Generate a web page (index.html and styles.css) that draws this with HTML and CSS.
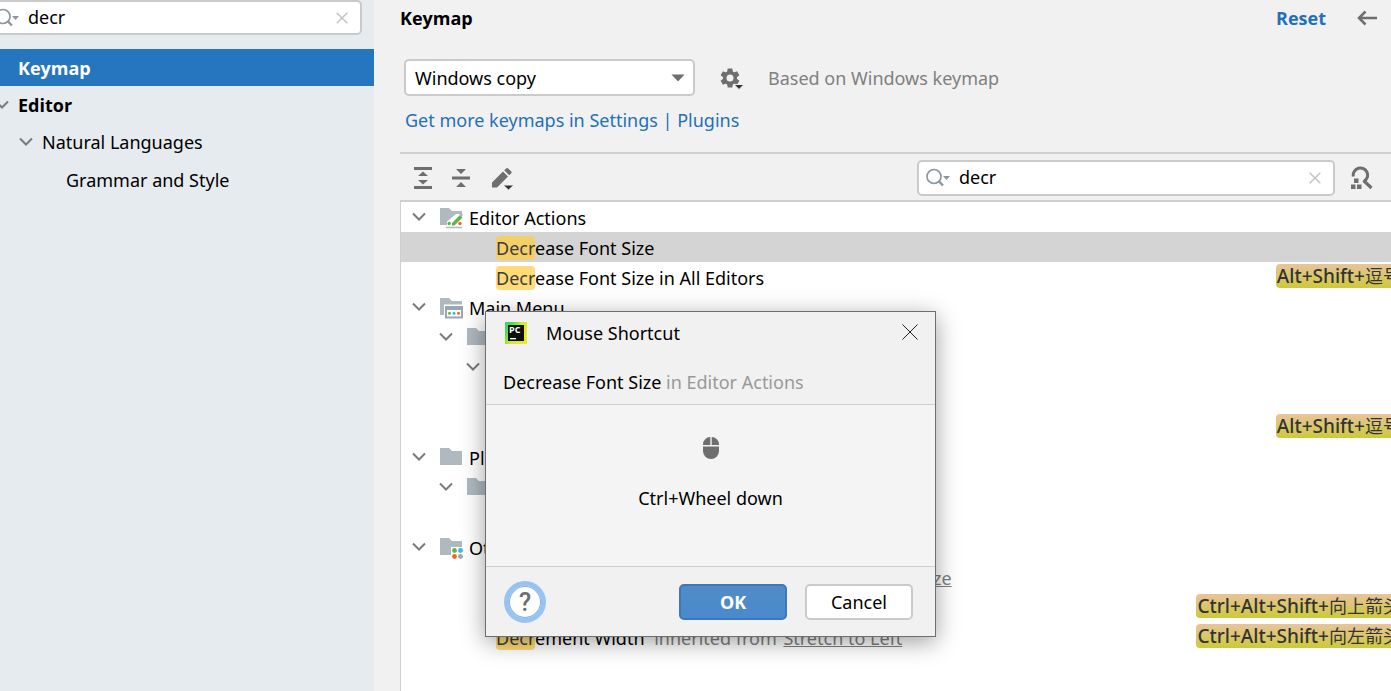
FILE: index.html
```html
<!DOCTYPE html>
<html lang="en">
<head>
<meta charset="utf-8">
<title>Keymap settings</title>
<link rel="stylesheet" href="styles.css">
</head>
<body>
<svg class="sprite" aria-hidden="true">
  <symbol id="chevron" viewBox="0 0 14 10"><path d="M1 1.500 7 7.500 13 1.500" fill="none" stroke="#7a7a7a" stroke-width="2"/></symbol>
  <symbol id="folder" viewBox="0 0 24 24"><path d="M1 3h9l3 3h10v14H1z" fill="#afb9c0"/></symbol>
  <symbol id="search" viewBox="0 0 26 20"><circle cx="9" cy="8.500" r="7" fill="none" stroke="#8b969e" stroke-width="1.700"/><path d="m13.500 13 4.500 4.500" stroke="#8b969e" stroke-width="2.400"/><path d="M18 8h7l-3.500 4z" fill="#8b969e"/></symbol>
  <symbol id="clear" viewBox="0 0 12 12"><path d="m.7.700 10.600 10.600M11.300.7.700 11.300" stroke="#bfc4c8" stroke-width="1.500"/></symbol>
</svg>
<div class="window">
  <aside class="sidebar">
    <div class="field sidebar-search">
      <svg class="search-icon"><use href="#search"/></svg>
      <input type="text" value="decr" aria-label="Search settings">
      <button class="clear" aria-label="Clear settings search"><svg><use href="#clear"/></svg></button>
    </div>
    <nav class="nav">
      <div class="nav-row active">Keymap</div>
      <div class="nav-row group"><svg class="chevron"><use href="#chevron"/></svg>Editor</div>
      <div class="nav-row child"><svg class="chevron"><use href="#chevron"/></svg>Natural Languages</div>
      <div class="nav-row leaf">Grammar and Style</div>
    </nav>
  </aside>

  <main class="main">
    <header class="header">
      <h1>Keymap</h1>
      <a class="reset" href="#">Reset</a>
      <button class="icon-button" aria-label="Back"><svg width="20" height="16" viewBox="0 0 20 16"><path d="M20 8H2M8.500 1.500 2 8l6.500 6.500" fill="none" stroke="#6e6e6e" stroke-width="2.500"/></svg></button>
    </header>

    <div class="scheme">
      <div class="combo">
        <select aria-label="Keymap scheme"><option>Windows copy</option></select>
        <svg width="14" height="8" viewBox="0 0 14 8"><path d="M.5.500h13L7 7.500z" fill="#6e6e6e"/></svg>
      </div>
      <button class="icon-button" aria-label="Scheme actions"><svg width="26" height="24" viewBox="0 0 26 24"><g transform="translate(11 12)" fill="#6e6e6e"><path fill-rule="evenodd" d="M0-7a7 7 0 1 0 0 14A7 7 0 1 0 0-7M0-3.500a3.500 3.500 0 1 1 0 7 3.500 3.500 0 1 1 0-7"/><g id="teeth"><path d="M-2.300-9.500h4.600l.7 4h-6zM-2.300 9.500h4.600l.7-4h-6z"/></g><use href="#teeth" transform="rotate(60)"/><use href="#teeth" transform="rotate(120)"/></g><path d="M15 18.500h10l-5 5z" fill="#333" stroke="#f1f1f1"/></svg></button>
      <span class="hint">Based on Windows keymap</span>
    </div>
    <a class="more" href="#">Get more keymaps in Settings | Plugins</a>

    <div class="toolbar">
      <button class="icon-button" aria-label="Expand all"><svg width="18" height="22" viewBox="0 0 18 22" fill="#6e6e6e"><path d="M0 0h18v3H0zM0 19h18v3H0zM9 4.500l5 4.500H4zM9 17.500l5-4.500H4z"/></svg></button>
      <button class="icon-button" aria-label="Collapse all"><svg width="18" height="22" viewBox="0 0 18 22" fill="#6e6e6e"><path d="M0 9.500h18v3H0zM4 2h10l-5 5zM4 20h10l-5-5z"/></svg></button>
      <button class="icon-button" aria-label="Edit shortcut"><svg width="24" height="24" viewBox="0 0 24 24"><path d="M2 16.500 13 5.500l5 5-11 11H2zM14.200 4.300l1.900-1.900a1.500 1.500 0 0 1 2.100 0l2.900 2.900a1.500 1.500 0 0 1 0 2.100l-1.900 1.900z" fill="#6e6e6e"/><path d="M13 19h11l-5.500 5z" fill="#333" stroke="#f1f1f1"/></svg></button>
      <div class="field toolbar-search">
        <svg class="search-icon"><use href="#search"/></svg>
        <input type="text" value="decr" aria-label="Search actions">
        <button class="clear" aria-label="Clear action search"><svg><use href="#clear"/></svg></button>
      </div>
      <button class="icon-button" aria-label="Find by shortcut"><svg width="24" height="24" viewBox="0 0 24 24"><path d="M4.300 10.500a7.200 7.200 0 1 1 10.500 5" fill="none" stroke="#6e6e6e" stroke-width="3"/><path d="m14.500 14.500 8 7.500" stroke="#6e6e6e" stroke-width="3.200"/><path d="M5 12.500h4.500V17H5zM2 18.500h4.500V23H2zM8 18.500h4.500V23H8z" fill="#6e6e6e"/></svg></button>
    </div>

    <div class="tree" role="tree">
      <div class="row"><svg class="chevron"><use href="#chevron"/></svg><svg class="icon" viewBox="0 0 24 24"><use href="#folder"/><path d="M8 22.500v-6L17 9h7v13.500z" fill="#fff"/><path d="m13 18 8-8 2.500 2.500-8 8H13z" fill="#62b543"/><path d="m20 10 2-2 2 2-1.500 2z" fill="#afb9c0"/><circle cx="10.200" cy="18.500" r="1.700" fill="#62b543"/><circle cx="21" cy="18.500" r="1.700" fill="#f26522"/><path d="M7 22.500h16" stroke="#afb9c0" stroke-width="1.500"/></svg><span>Editor Actions</span></div>
      <div class="row item selected"><span><mark>Decr</mark>ease Font Size</span></div>
      <div class="row item"><span><mark>Decr</mark>ease Font Size in All Editors</span><kbd>Alt+Shift+<span lang="zh">逗号</span></kbd></div>
      <div class="row"><svg class="chevron"><use href="#chevron"/></svg><svg class="icon" viewBox="0 0 24 24"><use href="#folder"/><path d="M5 9.500h19V24H5z" fill="#fff"/><path d="M6 11h18v12.500H6z" fill="#9aa7b0"/><path d="M8 15h14v6.500H8z" fill="#fff"/><circle cx="10.500" cy="18.300" r="1.500" fill="#62b543"/><circle cx="15" cy="18.300" r="1.500" fill="#40b6e0"/><circle cx="19.500" cy="18.300" r="1.500" fill="#f26522"/></svg><span>Main Menu</span></div>
      <div class="row level-2"><svg class="chevron"><use href="#chevron"/></svg><svg class="icon"><use href="#folder"/></svg></div>
      <div class="row level-3"><svg class="chevron"><use href="#chevron"/></svg></div>
      <div class="row item"></div>
      <div class="row item"><kbd>Alt+Shift+<span lang="zh">逗号</span></kbd></div>
      <div class="row"><svg class="chevron"><use href="#chevron"/></svg><svg class="icon"><use href="#folder"/></svg><span>Plugins</span></div>
      <div class="row level-2"><svg class="chevron"><use href="#chevron"/></svg><svg class="icon"><use href="#folder"/></svg></div>
      <div class="row item"></div>
      <div class="row"><svg class="chevron"><use href="#chevron"/></svg><svg class="icon" viewBox="0 0 24 24"><use href="#folder"/><path d="M12 12h12v12H12z" fill="#fff"/><circle cx="15.500" cy="15.500" r="2.400" fill="#62b543"/><circle cx="21.500" cy="15.500" r="2.400" fill="#40b6e0"/><circle cx="15.500" cy="21.500" r="2.400" fill="#f26522"/><circle cx="21.500" cy="21.500" r="2.400" fill="#9aa7b0"/></svg><span>Other</span></div>
      <div class="row item"><span><mark>Decr</mark>ease Font Size <span class="inherited">inherited from <a href="#">Decrease Font Size</a></span></span></div>
      <div class="row item"><kbd>Ctrl+Alt+Shift+<span lang="zh">向上箭头</span></kbd></div>
      <div class="row item"><span><mark>Decr</mark>ement Width <span class="inherited">inherited from <a href="#">Stretch to Left</a></span></span><kbd>Ctrl+Alt+Shift+<span lang="zh">向左箭头</span></kbd></div>
    </div>
  </main>

  <section class="dialog" role="dialog" aria-labelledby="dialog-title">
    <header class="dialog-bar">
      <svg width="22" height="22" viewBox="0 0 22 22"><defs><linearGradient id="logo" x2="1" y2=".6"><stop stop-color="#21d789"/><stop offset=".25" stop-color="#4fdc48"/><stop offset=".6" stop-color="#d5e82e"/><stop offset="1" stop-color="#f0e62f"/></linearGradient></defs><path d="M0 0h22v22H0z" fill="url(#logo)"/><path d="M3 3h16v16H3z" fill="#0a100a"/><text x="4" y="11" class="logo-text">PC</text><path d="M5 16h6v1.300H5z" fill="#fff"/></svg>
      <h2 id="dialog-title">Mouse Shortcut</h2>
      <button class="icon-button close" aria-label="Close"><svg width="16" height="16" viewBox="0 0 16 16"><path d="m.5.500 15 15M15.500.500l-15 15" stroke="#222"/></svg></button>
    </header>
    <p class="action">Decrease Font Size <span>in Editor Actions</span></p>
    <div class="dialog-body">
      <svg width="16" height="22" viewBox="0 0 16 22" fill="#6e6e6e"><path d="M0 7.500A7.500 7.500 0 0 1 7.300 0v8H0zM8.700 0A7.500 7.500 0 0 1 16 7.500V8H8.700zM0 9.500h16V14A8 8 0 0 1 0 14z"/></svg>
      <p>Ctrl+Wheel down</p>
    </div>
    <footer class="dialog-footer">
      <button class="help" aria-label="Help">?</button>
      <button class="button primary">OK</button>
      <button class="button">Cancel</button>
    </footer>
  </section>
</div>
</body>
</html>
```

FILE: styles.css
```css
* { box-sizing: border-box; }

body {
  margin: 0;
  font: 18px/24px "Noto Sans", "Noto Sans CJK SC", sans-serif;
  color: #000;
  background: #f1f1f1;
}

h1, h2, p { margin: 0; font-size: inherit; }
svg { display: block; flex: none; }
button, input, select { font: inherit; color: inherit; }
a { color: #2470b8; text-decoration: none; }

.sprite { position: absolute; width: 0; height: 0; }
.window { position: relative; display: flex; min-height: 100vh; overflow: hidden; }
.icon-button { padding: 0; border: 0; background: none; }
.chevron { width: 14px; height: 10px; }

/* Search fields */
.field {
  display: flex;
  align-items: center;
  height: 36px;
  padding: 0 12px 0 6px;
  border: 2px solid #cacaca;
  border-radius: 5px;
  background: #fff;
}
.field input { flex: 1; min-width: 0; padding: 0 0 2px; border: 0; outline: 0; background: none; }
.search-icon { width: 26px; height: 20px; margin-right: 8px; }
.clear { padding: 0; border: 0; background: none; }
.clear svg { width: 12px; height: 12px; }

/* Sidebar */
.sidebar { flex: none; width: 374px; overflow: hidden; background: #e6ebef; }
.sidebar-search { height: 35px; margin: 0 12px 14px -14px; }
.nav-row { display: flex; align-items: center; height: 38px; padding-left: 18px; }
.nav-row.active,
.nav-row.group { height: 37px; font-family: "Open Sans", sans-serif; font-weight: bold; }
.nav-row.active { color: #fff; background: #2675bf; }
.nav-row.group { padding-left: 0; }
.nav-row.group .chevron { margin: 0 9px 0 -5px; }
.nav-row.child { padding-left: 19px; }
.nav-row.child .chevron { margin-right: 9px; }
.nav-row.leaf { padding-left: 66px; }

/* Main panel */
.main { flex: 1; min-width: 0; display: flex; flex-direction: column; padding-left: 26px; }
.header { display: flex; align-items: center; height: 36px; padding-right: 14px; font-family: "Open Sans", sans-serif; }
.header h1 { flex: 1; }
.reset { margin-right: 31px; font-weight: bold; }

.scheme { display: flex; align-items: center; margin-top: 23px; padding-left: 4px; }
.combo { display: grid; align-items: center; width: 291px; margin-right: 24px; }
.combo > * { grid-area: 1 / 1; }
.combo select {
  height: 37px;
  padding: 0 9px;
  appearance: none;
  border: 2px solid #cacaca;
  border-radius: 5px;
  background: #fff;
}
.combo svg { justify-self: end; margin-right: 10px; pointer-events: none; }
.hint { margin-left: 23px; color: #808080; }
.more { margin: 12px 0 20px 5px; }

.toolbar {
  display: flex;
  align-items: center;
  height: 48px;
  padding: 2px 18px 0 14px;
  gap: 20px;
  border-top: 2px solid #cfcfcf;
}
.toolbar-search { width: 418px; margin-left: auto; margin-right: -6px; }

/* Action tree */
.tree {
  flex: 1;
  overflow: hidden;
  border: solid #cfcfcf;
  border-width: 2px 0 0 1px;
  background: #fff;
}
.row { display: flex; align-items: center; height: 30px; padding-left: 11px; white-space: nowrap; }
.row > span { padding-top: 2px; }
.row .chevron { margin-right: 13px; }
.row .icon { width: 24px; height: 24px; margin-right: 6px; }
.level-2 { padding-left: 38px; }
.level-3 { padding-left: 65px; }
.item { padding-left: 95px; }
.selected { background: #d4d4d4; }
mark { border-radius: 4px; color: #3c3c3c; background: #ffdc78; }
.selected mark { background: #f3cf68; }
.inherited { margin-left: 5px; }
.inherited, .inherited a { color: #808080; }
.inherited a { margin-left: 2px; text-decoration: underline; }
kbd {
  margin: 0 -10px 2px auto;
  padding-left: 1px;
  border-radius: 4px;
  font: 500 19px/24px "Noto Sans", "Noto Sans CJK SC", sans-serif;
  color: #333;
  background: linear-gradient(#e8c49c, #cdc93a);
}
kbd span { font-size: 18px; font-weight: 400; }

/* Mouse shortcut dialog */
.dialog {
  position: absolute;
  top: 311px;
  left: 485px;
  width: 451px;
  border: 1px solid #6e6e6e;
  background: #f1f1f1;
  box-shadow: 0 5px 22px rgba(0, 0, 0, .38);
}
.dialog-bar { display: flex; align-items: center; height: 42px; padding: 0 17px 0 19px; }
.dialog-bar h2 { flex: 1; margin-left: 19px; font-weight: normal; }
.close { padding-bottom: 2px; }
.logo-text { font: bold 9px "Open Sans", sans-serif; fill: #fff; }
.action { padding: 16px 17px 10px; border-bottom: 1px solid #cfcfcf; }
.action span { color: #999; }
.dialog-body {
  display: flex;
  flex-direction: column;
  align-items: center;
  gap: 27px;
  height: 161px;
  padding-top: 32px;
  background: #f4f4f4;
}
.dialog-footer {
  display: flex;
  align-items: center;
  gap: 18px;
  height: 70px;
  padding: 0 22px 0 18px;
  border-top: 1px solid #cfcfcf;
}
.help {
  width: 42px;
  height: 42px;
  margin-right: auto;
  padding: 2px 0 0;
  border: 5px solid #97c3f3;
  border-radius: 50%;
  background: #fff;
  box-shadow: inset 0 0 0 1px #87afda;
  color: #6e6e6e;
  font: 500 25px/30px Roboto, sans-serif;
}
.button {
  width: 108px;
  height: 36px;
  padding: 0;
  border: 2px solid #cacaca;
  border-radius: 5px;
  background: #fff;
}
.primary {
  border-color: #3c78bd;
  background: linear-gradient(#528cc7, #4989cc);
  color: #fff;
  font-weight: bold;
}
```
